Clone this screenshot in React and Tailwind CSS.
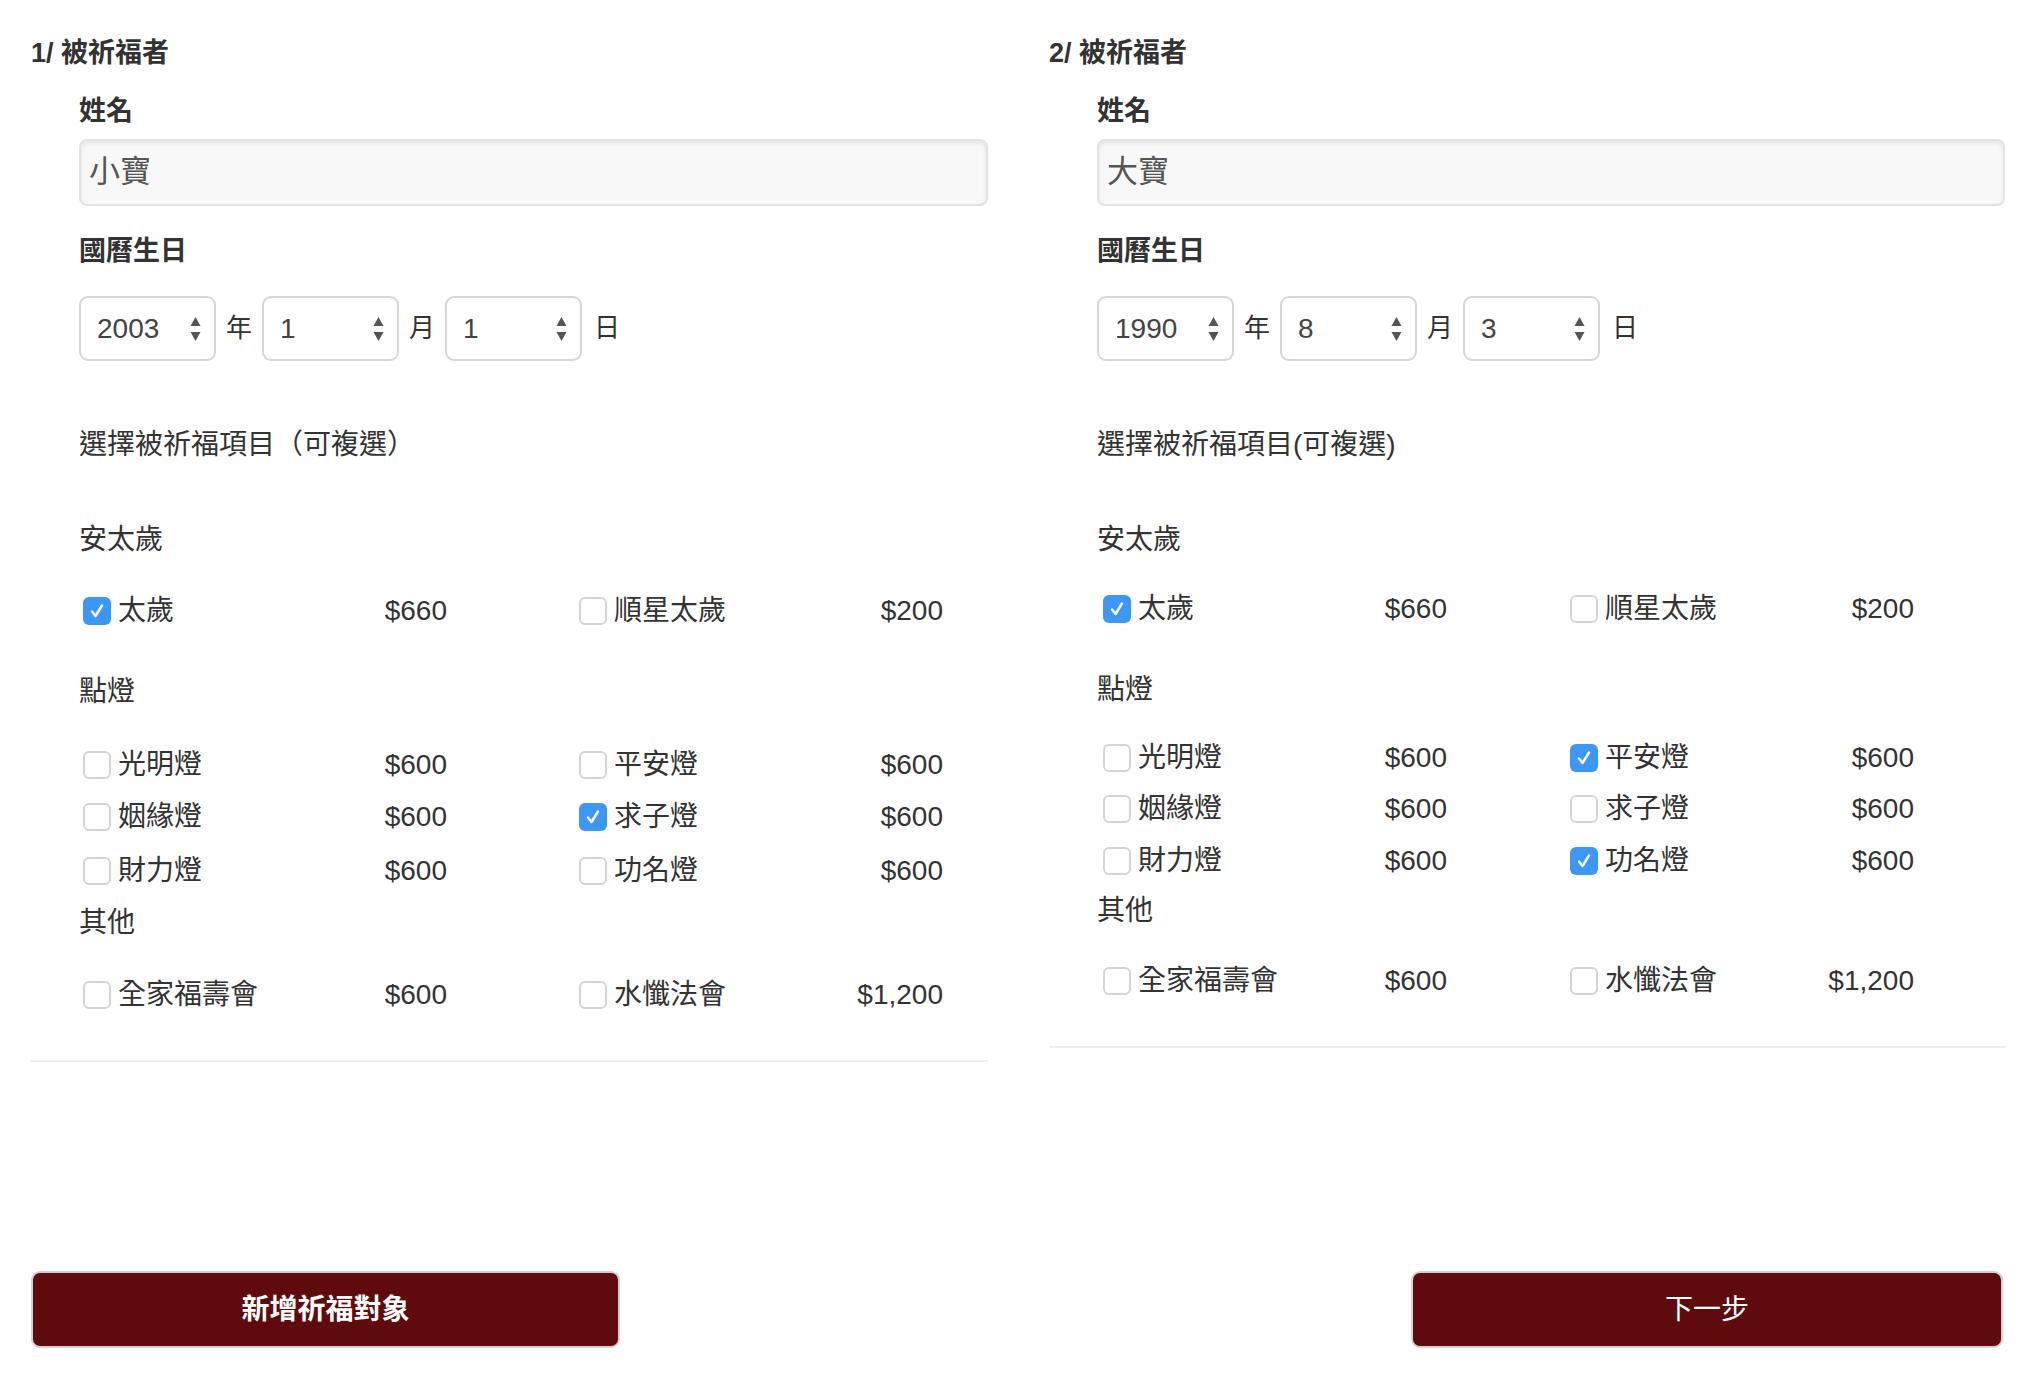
import React from 'react';

const FONT = { fontFamily: '"Liberation Sans", "Noto Sans CJK TC", sans-serif' };

const Checkbox = ({ checked }) => (
    checked ? (
        <span className="w-[28px] h-[28px] rounded-[6px] bg-[#3d97f7] flex items-center justify-center shrink-0">
            <svg width="18" height="18" viewBox="0 0 18 18">
                <path d="M4 9.5 L7.5 14 L14 3.5" fill="none" stroke="white" strokeWidth="2.4" strokeLinecap="round" strokeLinejoin="round" />
            </svg>
        </span>
    ) : (
        <span className="w-[28px] h-[28px] rounded-[6px] border-2 border-[#d4d4d4] bg-white shrink-0"></span>
    )
);

const Item = ({ label, price, checked, width }) => (
    <div className="flex items-center h-[40px]" style={{ width }}>
        <Checkbox checked={checked} />
        <span className="ml-[7px] text-[28px] leading-[40px] text-[#333]">{label}</span>
        <span className="ml-auto text-[28px] leading-[40px] text-[#333]">{price}</span>
    </div>
);

const Select = ({ value }) => (
    <div className="w-[137px] h-[65px] border-2 border-[#d6d6d6] rounded-[9px] bg-white flex items-center pl-[16px] pr-[13px]">
        <span className="text-[28px] text-[#444]">{value}</span>
        <svg className="ml-auto" width="11" height="26" viewBox="0 0 11 26">
            <path d="M5.5 1 L10.5 10 L0.5 10 Z" fill="#555" />
            <path d="M5.5 25 L10.5 16 L0.5 16 Z" fill="#555" />
        </svg>
    </div>
);

const Row = ({ items, colWidth, itemWidth, offset, mt }) => (
    <div className="grid" style={{ gridTemplateColumns: `${colWidth}px 1fr`, marginTop: mt, paddingLeft: offset }}>
        {items.map((it) => (
            <Item key={it.label} {...it} width={itemWidth} />
        ))}
    </div>
);

const Panel = ({ index, name, date, optionsTitle, checks, layout }) => {
    const { colWidth, itemWidth, offset, m } = layout;
    const row = (items, mt) => (
        <Row items={items} colWidth={colWidth} itemWidth={itemWidth} offset={offset} mt={mt} />
    );
    return (
        <div className="flex flex-col">
            <h2 className="text-[27px] leading-[40px] font-bold text-[#333]">{index}/ 被祈福者</h2>
            <div className="pl-[48px] flex flex-col">
                <div className="mt-[18px] text-[27px] leading-[40px] font-bold text-[#333]">姓名</div>
                <div className="mt-[8px] h-[67px] rounded-[8px] border-2 border-[#e3e3e3] bg-[#f8f8f8] shadow-[inset_0_3px_4px_rgba(0,0,0,0.07)] flex items-center pl-[8px] text-[31px] text-[#555]">
                    {name}
                </div>
                <div className="mt-[25px] text-[27px] leading-[40px] font-bold text-[#333]">國曆生日</div>
                <div className="mt-[25px] flex items-center text-[26px] text-[#333]">
                    <Select value={date[0]} />
                    <span className="mx-[10px]">年</span>
                    <Select value={date[1]} />
                    <span className="mx-[10px]">月</span>
                    <Select value={date[2]} />
                    <span className="mx-[12px]">日</span>
                </div>
                <div className="mt-[64px] text-[28px] leading-[40px] text-[#333]">{optionsTitle}</div>
                <div className="mt-[55px] text-[28px] leading-[40px] text-[#333]">安太歲</div>
                {row([
                    { label: '太歲', price: '$660', checked: checks.taisui },
                    { label: '順星太歲', price: '$200', checked: false },
                ], m[0])}
                <div className="text-[28px] leading-[40px] text-[#333]" style={{ marginTop: m[1] }}>點燈</div>
                {row([
                    { label: '光明燈', price: '$600', checked: false },
                    { label: '平安燈', price: '$600', checked: checks.pingan },
                ], m[2])}
                {row([
                    { label: '姻緣燈', price: '$600', checked: false },
                    { label: '求子燈', price: '$600', checked: checks.qiuzi },
                ], m[3])}
                {row([
                    { label: '財力燈', price: '$600', checked: false },
                    { label: '功名燈', price: '$600', checked: checks.gongming },
                ], m[4])}
                <div className="text-[28px] leading-[40px] text-[#333]" style={{ marginTop: m[5] }}>其他</div>
                {row([
                    { label: '全家福壽會', price: '$600', checked: false },
                    { label: '水懺法會', price: '$1,200', checked: false },
                ], m[6])}
            </div>
            <div className="h-[2px] bg-[#eeeeee]" style={{ marginTop: m[7] }}></div>
        </div>
    );
};

export default function App() {
    return (
        <div className="w-[2030px] h-[1380px] bg-white" style={FONT}>
            <div className="grid grid-cols-[957px_956px] gap-x-[61px] pl-[31px] pr-[25px] pt-[33px] items-start">
                <Panel
                    index={1}
                    name="小寶"
                    date={['2003', '1', '1']}
                    optionsTitle="選擇被祈福項目（可複選）"
                    checks={{ taisui: true, pingan: false, qiuzi: true, gongming: false }}
                    layout={{ colWidth: 496, itemWidth: 364, offset: 4, m: [31, 41, 33, 12, 14, 12, 32, 45] }}
                />
                <Panel
                    index={2}
                    name="大寶"
                    date={['1990', '8', '3']}
                    optionsTitle="選擇被祈福項目(可複選)"
                    checks={{ taisui: true, pingan: true, qiuzi: false, gongming: true }}
                    layout={{ colWidth: 467, itemWidth: 344, offset: 6, m: [29, 41, 28, 11, 12, 10, 30, 45] }}
                />
            </div>
            <div className="flex justify-between pl-[31px] pr-[27px] mt-[209px]">
                <button className="w-[589px] h-[77px] rounded-[9px] border-2 border-[#d2d2d2] bg-[#5f0b0e] text-white text-[28px] font-bold">
                    新增祈福對象
                </button>
                <button className="w-[592px] h-[77px] rounded-[9px] border-2 border-[#d2d2d2] bg-[#5f0b0e] text-white text-[28px]">
                    下一步
                </button>
            </div>
        </div>
    );
}
